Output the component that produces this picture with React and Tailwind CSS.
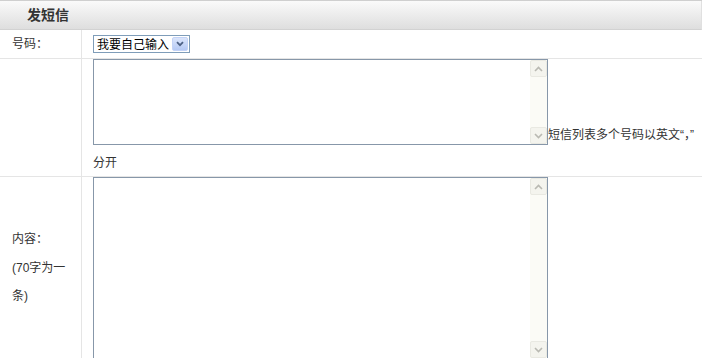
import { useState } from 'react'

const font = { fontFamily: '"Liberation Sans", "Noto Sans CJK SC", sans-serif' }

function ScrollArea({ height }) {
  return (
    <div className={`inline-block overflow-hidden align-[-6px] border border-[#8797a9] bg-white ${height}`}>
      <div className="flex h-full">
        <textarea className="w-[436px] h-full resize-none outline-none border-0 bg-white text-[12px] p-[2px]" />
        <div className="w-[17px] h-full bg-[#fbfbf6] flex flex-col justify-between">
          <div className="h-[17px] border border-[#e9e9e2] bg-[#f4f4ee] rounded-[2px] flex items-center justify-center">
            <svg width="9" height="6" viewBox="0 0 9 6"><path d="M1 5 L4.5 1.5 L8 5" fill="none" stroke="#b9b9b2" strokeWidth="1.6" /></svg>
          </div>
          <div className="h-[17px] border border-[#e9e9e2] bg-[#f4f4ee] rounded-[2px] flex items-center justify-center">
            <svg width="9" height="6" viewBox="0 0 9 6"><path d="M1 1 L4.5 4.5 L8 1" fill="none" stroke="#b9b9b2" strokeWidth="1.6" /></svg>
          </div>
        </div>
      </div>
    </div>
  )
}

export default function App() {
  const [mode, setMode] = useState('self')

  return (
    <div className="w-[702px] h-[358px] overflow-hidden bg-white text-[12px] text-[#333] border-t border-[#cfcfcf]" style={font}>
      <div className="h-[29px] flex items-center pl-[27px] bg-gradient-to-b from-[#fafafa] to-[#dedede] border-b border-[#d2d2d2] border-r border-r-[#e0e0e0]">
        <span className="text-[14px] font-bold text-[#333]">发短信</span>
      </div>

      <div className="grid grid-cols-[82px_1fr]">
        <div className="h-[29px] flex items-center pl-[12px] border-r border-b border-[#e5e5e5]">号码：</div>
        <div className="h-[29px] flex items-center pl-[11px] border-b border-[#e5e5e5]">
          <div className="relative w-[97px] h-[18px] border border-[#7f9db9] bg-white">
            <select
              value={mode}
              onChange={(e) => setMode(e.target.value)}
              className="appearance-none w-full h-full pl-[3px] text-[12px] text-black outline-none bg-transparent leading-[16px]"
              style={font}
            >
              <option value="self">我要自己输入</option>
            </select>
            <div className="absolute right-[1px] top-[1px] w-[16px] h-[14px] rounded-[2px] bg-gradient-to-b from-[#dbe5fb] to-[#b5c9f5] border border-[#c3d3f7] flex items-center justify-center pointer-events-none">
              <svg width="8" height="6" viewBox="0 0 8 6"><path d="M1 1.2 L4 4.2 L7 1.2" fill="none" stroke="#4d6185" strokeWidth="1.8" /></svg>
            </div>
          </div>
        </div>

        <div className="h-[118px] border-r border-b border-[#e5e5e5]" />
        <div className="h-[118px] pl-[11px] border-b border-[#e5e5e5] leading-[28px]">
          <ScrollArea height="h-[86px]" />
          <span className="whitespace-nowrap">短信列表多个号码以英文“，”</span>
          <br />
          <span>分开</span>
        </div>

        <div className="h-[190px] flex items-center pl-[12px] pb-[8px] border-r border-[#e5e5e5] leading-[28.5px]">
          <div>
            内容：<br />
            (70字为一<br />
            条)
          </div>
        </div>
        <div className="h-[190px] pl-[11px]">
          <div className="h-[182px] flex">
            <ScrollArea height="h-[182px]" />
          </div>
        </div>
      </div>
    </div>
  )
}
